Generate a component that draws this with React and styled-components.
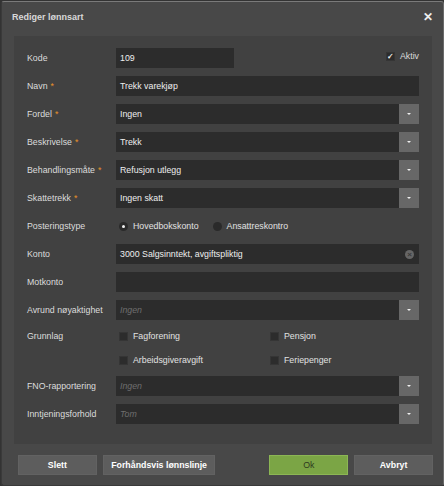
import React from 'react'
import styled, { createGlobalStyle } from 'styled-components'

const Global = createGlobalStyle`
body {
  margin: 0;
  background: #333333;
  font-family: "Liberation Sans", Arial, sans-serif;
}
`

const Dialog = styled.div`
width: 441px;
height: 483px;
margin: 1px 0 0 1px;
background-color: #484848;
border: 1px solid #3a3a3a;
border-top-color: #7a7a7a;
border-right-color: #6a6a6a;
border-radius: 3px;
display: flex;
flex-direction: column;
`

const Header = styled.div`
height: 34px;
display: flex;
align-items: center;
justify-content: space-between;
padding: 0 10px 0 10px;
`

const Title = styled.span`
color: #d8d8d8;
font-size: 9px;
font-weight: 700;
margin-top: -4px;
`

const Close = styled.span`
color: #eeeeee;
font-size: 12px;
font-weight: 700;
margin-top: -4px;
`

const Panel = styled.div`
margin: 0 11px 0 12px;
background-color: #414141;
padding: 12px 13px 20px 13px;
display: flex;
flex-direction: column;
gap: 8px;
`

const Row = styled.div`
display: grid;
grid-template-columns: 89px 1fr;
align-items: center;
min-height: ${p => (p.$small ? '16px' : '20px')};
`

const Label = styled.span`
color: #dcdcdc;
font-size: 8.8px;
`

const Star = styled.span`
color: #e8912a;
margin-left: 3px;
`

const Field = styled.div`
height: 20px;
background-color: #2c2c2c;
display: flex;
align-items: center;
color: #eeeeee;
font-size: 8.8px;
width: ${p => p.$width || 'auto'};
`

const FieldText = styled.span`
flex: 1;
padding-left: 4px;
color: ${p => (p.$placeholder ? '#6e6e6e' : '#eeeeee')};
font-style: ${p => (p.$placeholder ? 'italic' : 'normal')};
`

const DropButton = styled.div`
width: 20px;
height: 20px;
background-color: #676767;
display: flex;
align-items: center;
justify-content: center;
&::after {
  content: '';
  border-left: 2px solid transparent;
  border-right: 2px solid transparent;
  border-top: 2px solid #f0f0f0;
}
`

const ClearIcon = styled.div`
width: 9px;
height: 9px;
border-radius: 50%;
background-color: #666666;
margin-right: 5px;
color: #3a3a3a;
font-size: 8px;
font-weight: 700;
line-height: 9px;
text-align: center;
`

const KodeLine = styled.div`
display: flex;
align-items: center;
justify-content: space-between;
`

const Aktiv = styled.label`
display: flex;
align-items: center;
gap: 5px;
color: #dcdcdc;
font-size: 8.8px;
margin-top: -4px;
`

const Box = styled.span`
width: 9px;
height: 9px;
background-color: #2c2c2c;
border: 1px solid #353535;
box-sizing: border-box;
display: flex;
align-items: center;
justify-content: center;
color: #f2f2f2;
font-size: 8px;
font-weight: 700;
line-height: 9px;
`

const RadioGroup = styled.div`
display: flex;
align-items: center;
gap: 14px;
padding-left: 3px;
`

const Option = styled.span`
display: flex;
align-items: center;
gap: 5px;
color: #e2e2e2;
font-size: 8.8px;
`

const Radio = styled.span`
width: 9px;
height: 9px;
border-radius: 50%;
background-color: #2a2a2a;
display: flex;
align-items: center;
justify-content: center;
&::after {
  content: '';
  width: 3px;
  height: 3px;
  border-radius: 50%;
  background-color: ${p => (p.$on ? '#f0f0f0' : 'transparent')};
}
`

const CheckGrid = styled.div`
display: grid;
grid-template-columns: 151px 1fr;
padding-left: 3px;
`

const Footer = styled.div`
display: flex;
padding: 11px 10px 0 16px;
`

const Button = styled.div`
height: 20px;
width: ${p => p.$w || '79px'};
margin-left: ${p => p.$ml || '6px'};
background-color: ${p => (p.$primary ? '#7ba545' : '#5d5d5d')};
border: 1px solid ${p => (p.$primary ? '#8cb654' : '#626262')};
box-sizing: border-box;
color: ${p => (p.$primary ? '#2e3a20' : '#ffffff')};
font-size: 8.8px;
font-weight: ${p => (p.$primary ? 400 : 700)};
display: flex;
align-items: center;
justify-content: center;
&:first-child { margin-left: 0; }
`

const Select = ({ value, placeholder }) => (
  <Field>
    <FieldText $placeholder={placeholder}>{value}</FieldText>
    <DropButton />
  </Field>
)

const Req = ({ children }) => (
  <Label>{children}<Star>*</Star></Label>
)

export default function App() {
  return (
    <>
      <Global />
      <Dialog>
        <Header>
          <Title>Rediger lønnsart</Title>
          <Close>✕</Close>
        </Header>
        <Panel>
          <Row>
            <Label>Kode</Label>
            <KodeLine>
              <Field $width="118px"><FieldText>109</FieldText></Field>
              <Aktiv><Box>✓</Box>Aktiv</Aktiv>
            </KodeLine>
          </Row>
          <Row>
            <Req>Navn</Req>
            <Field><FieldText>Trekk varekjøp</FieldText></Field>
          </Row>
          <Row>
            <Req>Fordel</Req>
            <Select value="Ingen" />
          </Row>
          <Row>
            <Req>Beskrivelse</Req>
            <Select value="Trekk" />
          </Row>
          <Row>
            <Req>Behandlingsmåte</Req>
            <Select value="Refusjon utlegg" />
          </Row>
          <Row>
            <Req>Skattetrekk</Req>
            <Select value="Ingen skatt" />
          </Row>
          <Row>
            <Label>Posteringstype</Label>
            <RadioGroup>
              <Option><Radio $on />Hovedbokskonto</Option>
              <Option><Radio />Ansattreskontro</Option>
            </RadioGroup>
          </Row>
          <Row>
            <Label>Konto</Label>
            <Field>
              <FieldText>3000 Salgsinntekt, avgiftspliktig</FieldText>
              <ClearIcon>×</ClearIcon>
            </Field>
          </Row>
          <Row>
            <Label>Motkonto</Label>
            <Field />
          </Row>
          <Row>
            <Label>Avrund nøyaktighet</Label>
            <Select value="Ingen" placeholder />
          </Row>
          <Row $small>
            <Label>Grunnlag</Label>
            <CheckGrid>
              <Option><Box />Fagforening</Option>
              <Option><Box />Pensjon</Option>
            </CheckGrid>
          </Row>
          <Row $small>
            <span />
            <CheckGrid>
              <Option><Box />Arbeidsgiveravgift</Option>
              <Option><Box />Feriepenger</Option>
            </CheckGrid>
          </Row>
          <Row>
            <Label>FNO-rapportering</Label>
            <Select value="Ingen" placeholder />
          </Row>
          <Row>
            <Label>Inntjeningsforhold</Label>
            <Select value="Tom" placeholder />
          </Row>
        </Panel>
        <Footer>
          <Button>Slett</Button>
          <Button $w="113px">Forhåndsvis lønnslinje</Button>
          <Button $primary $ml="54px">Ok</Button>
          <Button>Avbryt</Button>
        </Footer>
      </Dialog>
    </>
  )
}
